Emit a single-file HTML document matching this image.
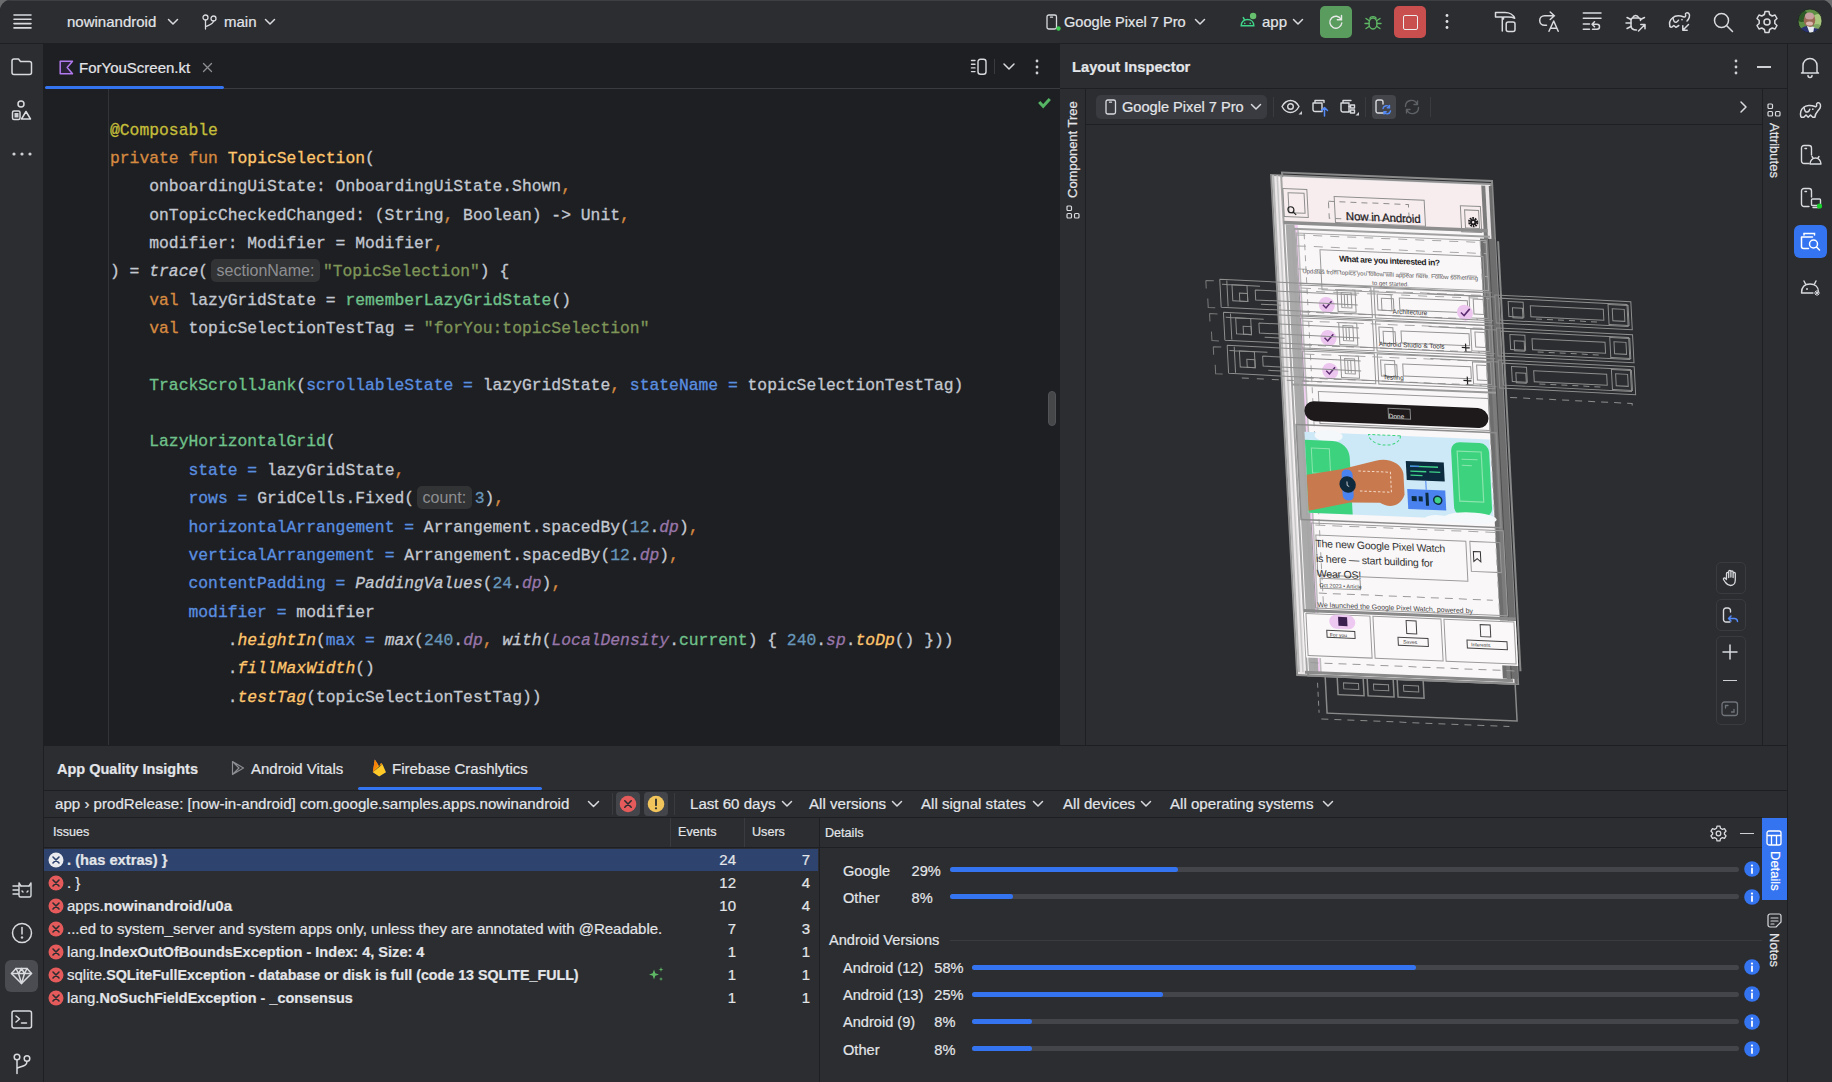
<!DOCTYPE html>
<html><head><meta charset="utf-8">
<style>
*{box-sizing:border-box;margin:0;padding:0}
html,body{width:1832px;height:1082px;overflow:hidden;background:#6b6c6e}
body{font-family:"Liberation Sans",sans-serif;color:#DFE1E5;position:relative}
.win{position:absolute;left:0;top:0;width:1832px;height:1082px;background:#2B2D30;border-radius:11px 11px 0 0;overflow:hidden}
.win:after{content:"";position:absolute;left:0;top:0;right:0;height:1px;background:#3D3F43;border-radius:11px 11px 0 0}
.a{position:absolute}
.t{position:absolute;white-space:pre;font-size:15px;line-height:20px;color:#E3E5E9;-webkit-text-stroke:0.2px currentColor}
.s13{font-size:13px;line-height:16px}
.b{font-weight:bold}
.code{position:absolute;left:110px;top:116.5px;font-family:"Liberation Mono",monospace;font-size:16.35px;line-height:28.36px;white-space:pre;color:#C3C8D1;-webkit-text-stroke:0.3px currentColor}
.kw{color:#D68A41}.an{color:#C4BE3A}.fd{color:#FFC66D}.st{color:#7F9659}.cf{color:#6FC28B}.na{color:#5A8FE0}.nu{color:#6897BB}.pu{color:#9876AA;font-style:italic}.ex{color:#FFC66D;font-style:italic}.it{font-style:italic}
.hint{-webkit-text-stroke:0;display:inline-block;background:#323335;color:#8E8F92;font-family:"Liberation Sans",sans-serif;font-size:16px;line-height:23px;border-radius:5px;padding:0 5.5px;margin:0 3px 0 3px;vertical-align:0px}
svg{position:absolute;overflow:visible}
.ic{fill:none;stroke:#D8DADE;stroke-width:1.5;stroke-linecap:round;stroke-linejoin:round}
</style></head><body>
<div class="win">
<!-- top bar -->
<div class="a" style="left:0;top:0;width:1832px;height:43px;background:#2B2D30"></div>
<div class="a" style="left:0;top:43px;width:1832px;height:1px;background:#1E1F22"></div>


<!-- top bar content -->
<svg style="left:13px;top:14px" width="19" height="16"><g class="ic" style="stroke-width:1.6"><path d="M1 1H18M1 5.3H18M1 9.6H18M1 13.9H18"/></g></svg>
<div class="t" style="left:67px;top:12px">nowinandroid</div>
<svg style="left:168px;top:19px" width="10" height="6"><path class="ic" d="M0.5 0.5L5 5L9.5 0.5"/></svg>
<svg style="left:202px;top:14px" width="15" height="16"><g class="ic" style="stroke-width:1.3"><circle cx="3.5" cy="3.5" r="2.5"/><circle cx="11.5" cy="4.5" r="2.5"/><path d="M3.5 6V15M11.5 7C11.5 10 8 10.5 3.8 12.5"/></g></svg>
<div class="t" style="left:224px;top:12px">main</div>
<svg style="left:265px;top:19px" width="10" height="6"><path class="ic" d="M0.5 0.5L5 5L9.5 0.5"/></svg>

<svg style="left:1046px;top:14px" width="16" height="17"><g class="ic" style="stroke-width:1.3"><rect x="1" y="1" width="9.5" height="14" rx="1.8"/><path d="M4.5 3.2H6.5"/></g><circle cx="12.5" cy="14.5" r="2.2" fill="#3DCB55"/></svg>
<div class="t" style="left:1064px;top:12px;font-size:14.6px">Google Pixel 7 Pro</div>
<svg style="left:1195px;top:19px" width="10" height="6"><path class="ic" d="M0.5 0.5L5 5L9.5 0.5"/></svg>
<svg style="left:1239px;top:12px" width="19" height="16"><g fill="none" stroke="#3FD68A" stroke-width="1.5" stroke-linecap="round"><path d="M2.2 13.7C2.2 10 4.8 7.6 8.5 7.6C12.2 7.6 14.8 10 14.8 13.7Z"/><path d="M4.3 5.6L5.7 8.2"/></g><circle cx="5.8" cy="11.4" r="0.8" fill="#3FD68A"/><circle cx="11.2" cy="11.4" r="0.8" fill="#3FD68A"/><circle cx="14.1" cy="4" r="3.2" fill="#66C06E"/></svg>
<div class="t" style="left:1262px;top:12px">app</div>
<svg style="left:1293px;top:19px" width="10" height="6"><path class="ic" d="M0.5 0.5L5 5L9.5 0.5"/></svg>
<div class="a" style="left:1320px;top:6px;width:32px;height:32px;background:#599C5E;border-radius:5px"></div>
<svg style="left:1328px;top:14px" width="16" height="16"><g fill="none" stroke="#E8E8E8" stroke-width="1.4" stroke-linecap="round"><path d="M13.2 5.5A6 6 0 1 0 13.8 9"/><path d="M13.5 1.5V5.8H9.3"/></g></svg>
<svg style="left:1364px;top:13px" width="18" height="18"><g fill="none" stroke="#5FB865" stroke-width="1.4" stroke-linecap="round"><ellipse cx="9" cy="10.5" rx="4" ry="5.5"/><path d="M6 5.5C6 3 12 3 12 5.5M1 10.5H5M13 10.5H17M2 5.5L5 7.5M16 5.5L13 7.5M2 15.5L5 13.5M16 15.5L13 13.5"/></g></svg>
<div class="a" style="left:1394px;top:6px;width:32px;height:32px;background:#C94F4F;border-radius:5px"></div>
<div class="a" style="left:1402.5px;top:14.5px;width:15px;height:15px;border:1.5px solid #EDEDED;border-radius:2px"></div>
<svg style="left:1444px;top:13px" width="6" height="18"><g fill="#DFE1E5"><circle cx="3" cy="2.5" r="1.4"/><circle cx="3" cy="8.5" r="1.4"/><circle cx="3" cy="14.5" r="1.4"/></g></svg>

<svg style="left:1488px;top:6px" width="34" height="32"><g class="ic" style="stroke-width:1.5"><path d="M7.5 6.5H17C21.5 6.5 25.5 9 26.7 12.3C25 11.3 22.5 11 20 11H15.5V13M7.5 6.5V11H14.3M14.3 11.5V25"/><rect x="18.2" y="16" width="8.8" height="9.5" rx="2"/></g></svg>
<svg style="left:1488px;top:6px" width="80" height="32"><g class="ic" style="stroke-width:1.5"><path d="M66.5 9.7H56.5A4.8 4.8 0 0 0 56.5 19.3H58.5M62.2 6L66.3 9.7L62.2 13.5M61 25.3L65.7 15L70.2 25.3M62.5 22.2H68.7"/></g></svg>
<svg style="left:1578px;top:6px" width="30" height="32"><g class="ic" style="stroke-width:1.5"><path d="M5.3 7H23M5.3 12.3H23M5.3 18H11.5M5.3 23.3H11.5M14 18.3H19A2.5 2.5 0 0 1 19 23.3H14.5M16.5 15.8L14 18.3L16.5 20.8"/></g></svg>
<svg style="left:1620px;top:6px" width="34" height="32"><g class="ic" style="stroke-width:1.5"><path d="M12.8 11.5A3 3 0 0 1 18.5 11.5"/><path d="M20.5 14.5V13.5C20.5 12.5 19.5 12 18.5 12H13C12 12 11 13 11 14.5V19.5C11 22.5 13 24 16.5 24"/><path d="M7 11.5L11 13.5M6 17H11M7 22.5L11 20.5M24.5 11.5L20.5 13.5"/><path d="M18.5 25L25 18.5M20.8 18.5H25V22.7"/></g></svg>
<svg style="left:1662px;top:6px" width="34" height="32"><g class="ic" style="stroke-width:1.5"><path d="M8 20.5C7 17 8.5 13.5 10.5 12C13 9.5 18 9.5 22 11C23.5 11.5 24 9.5 23.5 8.5C23 7 25.5 6 26.8 7.5C28.5 9.5 27 13 25 15"/><path d="M8 20.5C8.5 21.5 9.5 21.5 10.2 20.8L11.8 19.5L14 21.3L16.8 19.5"/><path d="M11 12C11.5 15 12.5 16.5 14.2 16.2C15 16 16 15 16.5 14.2"/><path d="M26.5 18.5L20.8 24.2M20.8 19.8V24.2H25.2"/></g><circle cx="20" cy="13.6" r="0.9" fill="#CED0D6"/></svg>
<svg style="left:1713px;top:12px" width="21" height="21"><g class="ic"><circle cx="8.5" cy="8.5" r="7"/><path d="M13.5 13.5L19.5 19.5"/></g></svg>
<svg style="left:1756px;top:11px" width="22" height="22"><g class="ic"><path d="M9 1.5H13L13.6 4.4L16.2 5.9L19 4.9L21 8.4L18.8 10.4V13.4L21 15.4L19 18.9L16.2 17.9L13.6 19.4L13 22.3H9L8.4 19.4L5.8 17.9L3 18.9L1 15.4L3.2 13.4V10.4L1 8.4L3 4.9L5.8 5.9L8.4 4.4Z" transform="translate(0,-0.9)"/><circle cx="11" cy="11" r="3"/></g></svg>
<svg style="left:1797px;top:8px" width="26" height="26" viewBox="0 0 26 26"><defs><clipPath id="av"><circle cx="13" cy="13" r="12"/></clipPath></defs><g clip-path="url(#av)"><rect width="26" height="26" fill="#5E8F45"/><circle cx="5" cy="8" r="6" fill="#2F5A28"/><circle cx="21" cy="12" r="6" fill="#A9C87E"/><circle cx="20" cy="20" r="4" fill="#7FA862"/><ellipse cx="12.5" cy="12" rx="5.8" ry="7.2" fill="#9A6A55"/><ellipse cx="12.5" cy="8" rx="4.5" ry="3.5" fill="#C9A0A0"/><ellipse cx="12.5" cy="15.5" rx="3.5" ry="2" fill="#D9B7AE"/><path d="M1 24C3 20 7 18.5 10 18L13 26H1Z" fill="#2B3270"/><path d="M10 18L13 19L16 18.5L19 21L17 26H13Z" fill="#E8ECF2"/><path d="M17 20L22 21L25 26H16Z" fill="#2B3270"/></g><circle cx="13" cy="13" r="12" fill="none" stroke="#1E1F22" stroke-width="0.8"/></svg>

<!-- left toolbar -->
<div class="a" style="left:0;top:44px;width:43px;height:1038px;background:#2B2D30"></div>
<div class="a" style="left:43px;top:44px;width:1px;height:1038px;background:#1E1F22"></div>

<!-- editor -->
<div class="a" style="left:44px;top:44px;width:1016px;height:701px;background:#1E1F22"></div>
<div class="a" style="left:224px;top:88px;width:836px;height:1px;background:#393B40"></div>
<div class="a" style="left:45px;top:86px;width:179px;height:3px;background:#3574F0;border-radius:2px"></div>
<div class="a" style="left:108px;top:89px;width:1px;height:656px;background:#313337"></div>

<div class="code"><span class="an">@Composable</span>
<span class="kw">private fun </span><span class="fd">TopicSelection</span>(
    onboardingUiState: OnboardingUiState.Shown<span class="kw">,</span>
    onTopicCheckedChanged: (String<span class="kw">,</span> Boolean) -> Unit<span class="kw">,</span>
    modifier: Modifier = Modifier<span class="kw">,</span>
) = <span class="it">trace</span>(<span class="hint">sectionName:</span><span class="st">"TopicSelection"</span>) {
    <span class="kw">val </span>lazyGridState = <span class="cf">rememberLazyGridState</span>()
    <span class="kw">val </span>topicSelectionTestTag = <span class="st">"forYou:topicSelection"</span>

    <span class="cf">TrackScrollJank</span>(<span class="na">scrollableState =</span> lazyGridState<span class="kw">, </span><span class="na">stateName =</span> topicSelectionTestTag)

    <span class="cf">LazyHorizontalGrid</span>(
        <span class="na">state =</span> lazyGridState<span class="kw">,</span>
        <span class="na">rows =</span> GridCells.Fixed(<span class="hint">count:</span><span class="nu">3</span>)<span class="kw">,</span>
        <span class="na">horizontalArrangement =</span> Arrangement.spacedBy(<span class="nu">12</span>.<span class="pu">dp</span>)<span class="kw">,</span>
        <span class="na">verticalArrangement =</span> Arrangement.spacedBy(<span class="nu">12</span>.<span class="pu">dp</span>)<span class="kw">,</span>
        <span class="na">contentPadding =</span> <span class="it">PaddingValues</span>(<span class="nu">24</span>.<span class="pu">dp</span>)<span class="kw">,</span>
        <span class="na">modifier =</span> modifier
            .<span class="ex">heightIn</span>(<span class="na">max =</span> <span class="it">max</span>(<span class="nu">240</span>.<span class="pu">dp</span><span class="kw">, </span><span class="it">with</span>(<span class="pu">LocalDensity</span>.<span class="cf">current</span>) { <span class="nu">240</span>.<span class="pu">sp</span>.<span class="ex">toDp</span>() }))
            .<span class="ex">fillMaxWidth</span>()
            .<span class="ex">testTag</span>(topicSelectionTestTag))</div>


<!-- left toolbar icons -->
<svg style="left:11px;top:58px" width="22" height="18"><path class="ic" d="M1 3A2 2 0 0 1 3 1H7.5L9.5 3.5H18.5A2 2 0 0 1 20.5 5.5V14.5A2 2 0 0 1 18.5 16.5H3A2 2 0 0 1 1 14.5Z" style="stroke-width:1.5"/></svg>
<svg style="left:11px;top:100px" width="22" height="22"><g class="ic" style="stroke-width:1.5"><circle cx="10" cy="4" r="3"/><rect x="1.5" y="11" width="7.5" height="8.5" rx="1.5"/><path d="M15 11.5L19.5 19H10.5Z"/></g><rect x="3.5" y="13" width="4" height="4.5" fill="#CED0D6"/></svg>
<svg style="left:12px;top:151px" width="20" height="6"><g fill="#CED0D6"><circle cx="2" cy="3" r="1.6"/><circle cx="10" cy="3" r="1.6"/><circle cx="18" cy="3" r="1.6"/></g></svg>

<svg style="left:12px;top:881px" width="22" height="18"><g class="ic" style="stroke-width:1.4"><path d="M1 5H6M1 9H6M1 13H6M7 2L9 5M19 2L17 5M7 2V14.5A1.5 1.5 0 0 0 8.5 16H17.5A1.5 1.5 0 0 0 19 14.5V2"/><path d="M9 5H17M10 10L11 11M16 10L15 11"/></g></svg>
<svg style="left:11px;top:922px" width="22" height="22"><g class="ic" style="stroke-width:1.5"><circle cx="11" cy="11" r="9.5"/><path d="M11 5.5V12"/></g><circle cx="11" cy="15.5" r="1.2" fill="#CED0D6"/></svg>
<div class="a" style="left:5px;top:960px;width:33px;height:32px;background:#4A4C51;border-radius:6px"></div>
<svg style="left:11px;top:967px" width="22" height="18"><g class="ic" style="stroke-width:1.5"><path d="M5 1.5H16L20.5 6.5L10.5 16.5L0.5 6.5Z"/><path d="M0.5 6.5H20.5M7.5 6.5L10.5 16.5L13.5 6.5M5 1.5L7.5 6.5L10.5 1.5L13.5 6.5L16 1.5"/></g></svg>
<svg style="left:11px;top:1010px" width="22" height="20"><g class="ic" style="stroke-width:1.5"><rect x="1" y="1" width="19.5" height="17" rx="2"/><path d="M5 6L8.5 9L5 12M10.5 13H15.5"/></g></svg>
<svg style="left:13px;top:1053px" width="18" height="22"><g class="ic" style="stroke-width:1.5"><circle cx="4" cy="4" r="2.8"/><circle cx="14" cy="5.5" r="2.8"/><path d="M4 7V20.5M14 8.5C14 12.5 10 13 4.5 15"/></g></svg>

<!-- editor tab -->
<svg style="left:59px;top:60px" width="16" height="16"><path d="M1.2 1.2H13.5L8.2 7.5L13.5 13.8H1.2Z" fill="#2A2337" stroke="#B27AF0" stroke-width="1.5" stroke-linejoin="round"/></svg>
<div class="t" style="left:79px;top:58px">ForYouScreen.kt</div>
<svg style="left:202px;top:62px" width="11" height="11"><path d="M1.5 1.5L9.5 9.5M9.5 1.5L1.5 9.5" stroke="#8C8E93" stroke-width="1.3" stroke-linecap="round"/></svg>
<svg style="left:970px;top:58px" width="20" height="18"><g class="ic" style="stroke-width:1.4"><path d="M1.5 2.5H5M1.5 6.2H5M1.5 9.9H5M1.5 13.6H5"/><rect x="8" y="1.2" width="8" height="15" rx="2.5"/></g></svg>
<div class="a" style="left:994px;top:59px;width:1px;height:15px;background:#393B40"></div>
<svg style="left:1003px;top:63px" width="12" height="8"><path class="ic" d="M1 1L6 6L11 1"/></svg>
<svg style="left:1034px;top:59px" width="6" height="16"><g fill="#CED0D6"><circle cx="3" cy="2" r="1.4"/><circle cx="3" cy="8" r="1.4"/><circle cx="3" cy="14" r="1.4"/></g></svg>
<svg style="left:1037px;top:96px" width="15" height="13"><path d="M2.2 5.9L6.2 10.2L12.8 3" fill="none" stroke="#55B565" stroke-width="3"/></svg>
<div class="a" style="left:1048px;top:390.5px;width:8px;height:35px;background:#464749;border:1px solid #525356;border-radius:4px"></div>

<!-- layout inspector -->
<div class="a" style="left:1060px;top:44px;width:727px;height:701px;background:#2B2D30"></div>


<!-- LI header -->
<div class="t b" style="left:1072px;top:57px;font-size:14.7px">Layout Inspector</div>
<svg style="left:1733px;top:59px" width="6" height="16"><g fill="#CED0D6"><circle cx="3" cy="2" r="1.4"/><circle cx="3" cy="8" r="1.4"/><circle cx="3" cy="14" r="1.4"/></g></svg>
<div class="a" style="left:1757px;top:66px;width:14px;height:1.5px;background:#CED0D6"></div>
<div class="a" style="left:1060px;top:88px;width:727px;height:1px;background:#1E1F22"></div>
<!-- component tree strip -->
<div class="a" style="left:1085px;top:89px;width:1px;height:656px;background:#1E1F22"></div>
<div class="t s13" style="left:1065px;top:198px;transform:rotate(-90deg);transform-origin:0 0;width:97px">Component Tree</div>
<svg style="left:1066px;top:205px" width="14" height="14"><g class="ic" style="stroke-width:1.2"><rect x="1" y="1" width="4.5" height="4.5" rx="1"/><rect x="1" y="8.5" width="4.5" height="4.5" rx="1"/><rect x="8.5" y="8.5" width="4.5" height="4.5" rx="1"/></g></svg>
<!-- attributes strip -->
<div class="a" style="left:1762px;top:89px;width:1px;height:656px;background:#1E1F22"></div>
<div class="t s13" style="left:1782px;top:123px;transform:rotate(90deg);transform-origin:0 0;width:57px">Attributes</div>
<svg style="left:1767px;top:103px" width="14" height="14"><g class="ic" style="stroke-width:1.2"><rect x="1" y="1" width="4.5" height="4.5" rx="1"/><rect x="1" y="8.5" width="4.5" height="4.5" rx="1"/><rect x="8.5" y="8.5" width="4.5" height="4.5" rx="1"/></g></svg>
<!-- LI toolbar -->
<div class="a" style="left:1086px;top:124px;width:676px;height:1px;background:#1E1F22"></div>
<div class="a" style="left:1096px;top:95px;width:171px;height:24px;background:#393B40;border-radius:5px"></div>
<svg style="left:1105px;top:99px" width="12" height="16"><g class="ic" style="stroke-width:1.3"><rect x="1" y="1" width="9.5" height="14" rx="1.8"/><path d="M4.5 3.2H6.5"/></g></svg>
<div class="t" style="left:1122px;top:97px;font-size:14.6px">Google Pixel 7 Pro</div>
<svg style="left:1251px;top:104px" width="10" height="6"><path class="ic" d="M0.5 0.5L5 5L9.5 0.5"/></svg>
<div class="a" style="left:1273px;top:97px;width:1px;height:20px;background:#393B40"></div>
<svg style="left:1281px;top:99px" width="22" height="16"><g class="ic" style="stroke-width:1.4"><path d="M1 7.5C3.5 3 6.5 1.5 9.5 1.5C12.5 1.5 15.5 3 18 7.5C15.5 12 12.5 13.5 9.5 13.5C6.5 13.5 3.5 12 1 7.5Z"/><circle cx="9.5" cy="7.5" r="2.8"/></g><path d="M21 12V15.5H17.5Z" fill="#CED0D6"/></svg>
<svg style="left:1312px;top:99px" width="18" height="18"><g class="ic" style="stroke-width:1.4"><path d="M3 3.5V1.5H12V3.5M1 4H10V12.5H3A2 2 0 0 1 1 10.5Z"/></g><g fill="none" stroke="#548AF7" stroke-width="1.5" stroke-linecap="round" stroke-linejoin="round"><path d="M12.5 17V8.5M9.5 11.5L12.5 8.5L15.5 11.5"/></g></svg>
<svg style="left:1340px;top:99px" width="20" height="18"><g class="ic" style="stroke-width:1.4"><path d="M3 3.5V1.5H11M1 4H9V13H3A2 2 0 0 1 1 11Z"/><rect x="10.5" y="6" width="4" height="3"/><rect x="10.5" y="11" width="4" height="3"/><path d="M9 7.5H10.5M9 12.5H10.5"/></g><path d="M19 13V16.5H15.5Z" fill="#CED0D6"/></svg>
<div class="a" style="left:1365px;top:97px;width:1px;height:20px;background:#393B40"></div>
<div class="a" style="left:1372px;top:95px;width:24px;height:24px;background:#43454A;border-radius:4px"></div>
<svg style="left:1375px;top:99px" width="18" height="17"><g class="ic" style="stroke-width:1.4"><path d="M8.5 14H3A2 2 0 0 1 1 12V3A2 2 0 0 1 3 1H6A2 2 0 0 1 8 3V5"/></g><g fill="none" stroke="#548AF7" stroke-width="1.4" stroke-linecap="round"><path d="M8 9.5A3.5 3.5 0 0 1 14.5 8.5M15.5 12A3.5 3.5 0 0 1 9 13M14.5 6.5V8.8H12.3M9 15V12.8H11.2"/></g></svg>
<svg style="left:1403px;top:99px" width="18" height="16"><g fill="none" stroke="#5E6166" stroke-width="1.4" stroke-linecap="round"><path d="M2.5 7.5A6 6 0 0 1 14 5M15.5 8.5A6 6 0 0 1 4 11M14.5 2V5.5H11M3.5 14V10.5H7"/></g></svg>
<div class="a" style="left:1430px;top:97px;width:1px;height:20px;background:#393B40"></div>
<svg style="left:1740px;top:101px" width="7" height="12"><path class="ic" d="M1 1L6 6L1 11"/></svg>
<!--PHONE--><svg style="left:0;top:0" width="1832" height="1082" viewBox="0 0 1832 1082">
<g transform="matrix(1 0.041 0.052 1 1271 172)">
<rect x="0" y="3" width="220" height="500" fill="#EAE6E8" stroke="#8F8F8F" stroke-width="2"/>
<rect x="11" y="0" width="210" height="503" fill="none" stroke="#8A8A8A" stroke-width="2"/>
<rect x="8" y="5" width="206" height="495" fill="#FAF7F8"/>
<rect x="8" y="5" width="206" height="46" fill="#F7EDEE"/>
<rect x="12" y="52" width="9" height="448" fill="#A9A9A9"/>
<rect x="21" y="52" width="3" height="448" fill="#F3D0F3"/>
<path d="M2 3V500" stroke="#B8B8B8" stroke-width="2"/>
<path d="M6 3V500" stroke="#C8C8C8" stroke-width="1.5"/>
<path d="M10 3V500" stroke="#A5A5A5" stroke-width="2"/>
<path d="M20 55V500" stroke="#A8A8A8" stroke-width="3"/>
<path d="M24 55V500" stroke="#C0C0C0" stroke-width="1.5"/>
<rect x="206" y="58" width="15" height="440" fill="#6E6E6E"/><path d="M214 58V498" stroke="#4E4E4E" stroke-width="2"/>
<path d="M212 5V500" stroke="#7C7C7C" stroke-width="4"/>
<path d="M219 5V503" stroke="#6E6E6E" stroke-width="3"/>
<path d="M224 60V490" stroke="#888" stroke-width="2"/>
<path d="M10 50H214" stroke="#8D8D8D" stroke-width="3.5"/>
<path d="M20 56H216" stroke="#A0A0A0" stroke-width="2"/>
<g fill="none" stroke="#8E8E8E" stroke-width="1"><rect x="11" y="16" width="24" height="28"/><rect x="16" y="20" width="16" height="20"/><rect x="62" y="22" width="90" height="26"/><rect x="56" y="27" width="80" height="17" stroke-dasharray="6 5"/><rect x="188" y="26" width="20" height="26"/><rect x="192" y="30" width="14" height="18"/></g>
<text x="110" y="45" font-family="Liberation Sans" font-size="11.5" fill="#1D1B1E" text-anchor="middle" letter-spacing="-0.2" stroke="#1D1B1E" stroke-width="0.25">Now in Android</text>
<g fill="none" stroke="#222" stroke-width="1.2"><circle cx="18" cy="37" r="3"/><path d="M20 39L23 42"/></g>
<circle cx="200" cy="42" r="3.8" fill="none" stroke="#1D1B1E" stroke-width="2.6" stroke-dasharray="1.6 0.8"/><circle cx="200" cy="42" r="3" fill="#1D1B1E"/><circle cx="200" cy="42" r="1.2" fill="#F7EDEE"/>
<g stroke="#A8A8A8" stroke-width="1" fill="none">
<path d="M22 62H212" stroke-dasharray="9 8"/>
<path d="M22 73H212" stroke-dasharray="9 8"/>
<path d="M22 96H212" stroke-dasharray="9 8"/>
<path d="M22 118H212" stroke-dasharray="9 8"/>
<rect x="22" y="60" width="190" height="50"/>
<rect x="45" y="76" width="163" height="40" stroke="#9A9A9A"/>
</g>
<text x="114" y="87" font-family="Liberation Sans" font-size="8.5" font-weight="bold" fill="#222" text-anchor="middle" letter-spacing="-0.4">What are you interested in?</text>
<text x="114" y="100" font-family="Liberation Sans" font-size="6" fill="#555" text-anchor="middle">Updates from topics you follow will appear here. Follow something</text>
<text x="114" y="109" font-family="Liberation Sans" font-size="6" fill="#555" text-anchor="middle">to get started.</text>
<g fill="none" stroke="#959595" stroke-width="1">
<rect x="22" y="112" width="72" height="30"/><rect x="97" y="112" width="116" height="30"/>
<rect x="60" y="115" width="18" height="22"/><rect x="64" y="118" width="10" height="15"/><path d="M67 120V132M70 120V132"/>
<rect x="100" y="118" width="14" height="16"/><rect x="104" y="122" width="12" height="12"/>
<rect x="122" y="121" width="68" height="12"/><path d="M24 139H90M100 139H200" stroke-dasharray="8 6"/>
<rect x="192" y="116" width="18" height="22"/><rect x="196" y="119" width="10" height="15"/>
</g>
<circle cx="49" cy="131" r="8" fill="#ECC6EF"/><path d="M45 131L48 134L54 127" stroke="#5B2C6F" stroke-width="1.5" fill="none"/>
<text x="132" y="137" font-family="Liberation Sans" font-size="6.5" fill="#333" text-anchor="middle">Architecture</text>
<circle cx="187" cy="133" r="8" fill="#ECC6EF"/><path d="M183 133L186 136L192 129" stroke="#5B2C6F" stroke-width="1.5" fill="none"/>
<g fill="none" stroke="#959595" stroke-width="1">
<rect x="22" y="145" width="72" height="30"/><rect x="97" y="145" width="116" height="30"/>
<rect x="60" y="148" width="18" height="22"/><rect x="64" y="151" width="10" height="15"/><path d="M67 153V165M70 153V165"/>
<rect x="100" y="151" width="14" height="16"/><rect x="104" y="155" width="12" height="12"/>
<rect x="122" y="154" width="68" height="12"/><path d="M24 172H90M100 172H200" stroke-dasharray="8 6"/>
<rect x="192" y="149" width="18" height="22"/><rect x="196" y="152" width="10" height="15"/>
</g>
<circle cx="49" cy="164" r="8" fill="#ECC6EF"/><path d="M45 164L48 167L54 160" stroke="#5B2C6F" stroke-width="1.5" fill="none"/>
<text x="132" y="170" font-family="Liberation Sans" font-size="6.5" fill="#333" text-anchor="middle">Android Studio &amp; Tools</text>
<path d="M186 164V172M182 168H190" stroke="#222" stroke-width="1.2"/>
<g fill="none" stroke="#959595" stroke-width="1">
<rect x="22" y="178" width="72" height="30"/><rect x="97" y="178" width="116" height="30"/>
<rect x="60" y="181" width="18" height="22"/><rect x="64" y="184" width="10" height="15"/><path d="M67 186V198M70 186V198"/>
<rect x="100" y="184" width="14" height="16"/><rect x="104" y="188" width="12" height="12"/>
<rect x="122" y="187" width="68" height="12"/><path d="M24 205H90M100 205H200" stroke-dasharray="8 6"/>
<rect x="192" y="182" width="18" height="22"/><rect x="196" y="185" width="10" height="15"/>
</g>
<circle cx="49" cy="197" r="8" fill="#ECC6EF"/><path d="M45 197L48 200L54 193" stroke="#5B2C6F" stroke-width="1.5" fill="none"/>
<text x="112" y="203" font-family="Liberation Sans" font-size="6.5" fill="#333" text-anchor="middle">Testing</text>
<path d="M186 197V205M182 201H190" stroke="#222" stroke-width="1.2"/>
<path d="M10 212H214" stroke="#9A9A9A" stroke-width="2"/>
<g fill="none" stroke="#A6A6A6" stroke-width="1"><path d="M30 60V430M206 60V430" stroke-dasharray="6 5"/><path d="M24 115H210M24 148H210M24 181H210M26 352H210M26 442H210" stroke-dasharray="10 7"/><path d="M18 58V500" /></g>
<rect x="36" y="218" width="170" height="32" fill="none" stroke="#9A9A9A" stroke-width="1"/>
<rect x="21" y="228" width="184" height="20" rx="10" fill="#1E1A1C"/>
<text x="113" y="242" font-family="Liberation Sans" font-size="6.5" fill="#EEE" text-anchor="middle">Done</text>
<rect x="105" y="232" width="22" height="10" fill="none" stroke="#888" stroke-width="1"/>
<rect x="20" y="259" width="185" height="81" fill="#CDE9F7"/>
<ellipse cx="44" cy="262" rx="14" ry="6" fill="#F4F8FB"/>
<path d="M20 267H48A16 16 0 0 1 64 283V340H20Z" fill="#3DD37E"/><path d="M26 275H44V300H26Z" fill="none" stroke="#8BE5AE" stroke-width="1"/>
<path d="M116 259A16 10 0 0 1 84 259Z" fill="none" stroke="#3DD37E" stroke-width="1" stroke-dasharray="3 2"/>
<rect x="166" y="263" width="38" height="74" rx="9" fill="#3DD37E"/><rect x="172" y="272" width="24" height="50" fill="none" stroke="#8BE5AE" stroke-width="1.2"/><path d="M176 280H192M176 286H186" stroke="#8BE5AE" stroke-width="1"/>
<ellipse cx="182" cy="339" rx="26" ry="6" fill="#F4F8FB"/><ellipse cx="150" cy="341" rx="14" ry="4" fill="#F4F8FB"/>
<path d="M20 302L55 295L90 285C102 281 116 286 117 297L117 318C112 331 100 332 92 327L62 328L20 338Z" fill="#C87A4E"/>
<path d="M72 296H104V316H72" fill="none" stroke="#F3D9C8" stroke-width="1" stroke-dasharray="2.5 2"/>
<rect x="55" y="295" width="11" height="31" rx="5" fill="#4A82F0"/><circle cx="60.5" cy="310" r="8.2" fill="#0F2A3C"/><path d="M60 307V311L62 312" stroke="#EEE" stroke-width="0.8" fill="none"/>
<rect x="120" y="284" width="38" height="19" fill="#0D2B3E"/><path d="M124 289H152M124 294H140M143 294H154M124 298H136" stroke="#3FD38A" stroke-width="1.3"/><path d="M124 289H133" stroke="#4A82F0" stroke-width="1.3"/>
<path d="M139 303V312" stroke="#4A82F0" stroke-width="1"/>
<rect x="120" y="312" width="38" height="20" fill="#4A82F0"/><g fill="#0D2B3E"><rect x="124" y="319" width="5" height="5"/><rect x="131" y="319" width="4" height="5"/><rect x="138" y="315" width="3" height="13"/></g><circle cx="150" cy="322" r="4" fill="#3FD38A" stroke="#0D2B3E" stroke-width="1.5"/>
<g fill="none" stroke="#8C8C8C" stroke-width="1.5"><rect x="12" y="252" width="200" height="95"/></g>
<g fill="none" stroke="#9A9A9A" stroke-width="1"><rect x="22" y="350" width="192" height="85"/><rect x="26" y="362" width="150" height="40"/><rect x="180" y="362" width="30" height="30"/><rect x="28" y="405" width="40" height="10"/><path d="M26 420H200" stroke-dasharray="8 6"/></g>
<text font-family="Liberation Sans" font-size="10.5" fill="#333" letter-spacing="-0.2"><tspan x="25" y="374">The new Google Pixel Watch</tspan><tspan x="25" y="389">is here — start building for</tspan><tspan x="25" y="404">Wear OS!</tspan></text>
<text x="27" y="414" font-family="Liberation Sans" font-size="5.5" fill="#444">Oct 2023 • Article</text>
<text x="24" y="434" font-family="Liberation Sans" font-size="7" fill="#444">We launched the Google Pixel Watch, powered by</text>
<path d="M183 372H190V382L186.5 379L183 382Z" fill="none" stroke="#333" stroke-width="1"/>
<path d="M10 438H222" stroke="#8A8A8A" stroke-width="3"/>
<rect x="10" y="440" width="212" height="45" fill="#FBF8F9"/>
<g fill="none" stroke="#9A9A9A" stroke-width="1"><rect x="12" y="441" width="64" height="42"/><rect x="79" y="441" width="68" height="42"/><rect x="150" y="441" width="70" height="42"/><path d="M14 490H220" stroke-dasharray="8 6"/></g>
<rect x="35" y="441" width="26" height="14" rx="7" fill="#EDC8F0"/><rect x="44" y="443" width="9" height="9" fill="#3B1F4F"/>
<g fill="none" stroke="#444" stroke-width="1"><rect x="112" y="444" width="10" height="13"/><rect x="186" y="445" width="10" height="12"/><rect x="32" y="457" width="28" height="7"/><rect x="103" y="461" width="30" height="8"/><rect x="172" y="461" width="40" height="8"/></g>
<text font-family="Liberation Sans" font-size="5" fill="#333"><tspan x="35" y="463">For you</tspan><tspan x="108" y="467">Saves</tspan><tspan x="176" y="467">Interests</tspan></text>
<path d="M8 500H216" stroke="#8A8A8A" stroke-width="3"/>
<g fill="none" stroke="#8A8A8A" stroke-width="1.5"><rect x="28" y="503" width="190" height="37"/><rect x="40" y="503" width="26" height="18"/><rect x="70" y="503" width="26" height="18"/><rect x="100" y="503" width="26" height="18"/></g>
<g fill="none" stroke="#8A8A8A" stroke-width="1"><rect x="46" y="509" width="15" height="6"/><rect x="76" y="509" width="15" height="6"/><rect x="106" y="509" width="15" height="6"/><path d="M22 546H210" stroke-dasharray="7 6"/><path d="M20 510V540" stroke-dasharray="5 4"/></g>
</g>
<g transform="matrix(1 0.05 0.052 1 1271 172)" fill="none" stroke="#8E8E8E" stroke-width="1">
<path d="M-57 110H215M-57 138H215M-57 110V138"/>
<path d="M-50 111V137M-55 115H-17"/>
<rect x="-45" y="115" width="15" height="16"/><rect x="-38" y="123" width="8" height="8"/>
<path d="M-22 119H80M-22 119V129H80M-17 133H3" />
<path d="M-71 112V120M-71 112H-63M-70 130V139H-63" stroke="#7A7A7A"/>
<path d="M-55 143H215M-55 171H215M-55 143V171"/>
<path d="M-48 144V170M-53 148H-15"/>
<rect x="-43" y="148" width="15" height="16"/><rect x="-36" y="156" width="8" height="8"/>
<path d="M-20 152H80M-20 152V162H80M-15 166H5" />
<path d="M-69 145V153M-69 145H-61M-68 163V172H-61" stroke="#7A7A7A"/>
<path d="M-53 176H215M-53 204H215M-53 176V204"/>
<path d="M-46 177V203M-51 181H-13"/>
<rect x="-41" y="181" width="15" height="16"/><rect x="-34" y="189" width="8" height="8"/>
<path d="M-18 185H80M-18 185V195H80M-13 199H7" />
<path d="M-67 178V186M-67 178H-59M-66 196V205H-59" stroke="#7A7A7A"/>
<path d="M-40 208H40" stroke-dasharray="7 8"/>
<path d="M150 114H218"/>
<rect x="218" y="112" width="136" height="28"/>
<rect x="222" y="115" width="128" height="22"/>
<rect x="231" y="118" width="15" height="15"/><rect x="235" y="124" width="10" height="10"/>
<rect x="253" y="121" width="73" height="11"/><path d="M258 134H322" stroke-dasharray="6 5"/>
<rect x="331" y="116" width="20" height="20"/><rect x="335" y="120" width="12" height="12"/>
<path d="M150 147H218"/>
<rect x="218" y="145" width="136" height="28"/>
<rect x="222" y="148" width="128" height="22"/>
<rect x="231" y="151" width="15" height="15"/><rect x="235" y="157" width="10" height="10"/>
<rect x="253" y="154" width="73" height="11"/><path d="M258 167H322" stroke-dasharray="6 5"/>
<rect x="331" y="149" width="20" height="20"/><rect x="335" y="153" width="12" height="12"/>
<path d="M150 179H218"/>
<rect x="218" y="177" width="136" height="28"/>
<rect x="222" y="180" width="128" height="22"/>
<rect x="231" y="183" width="15" height="15"/><rect x="235" y="189" width="10" height="10"/>
<rect x="253" y="186" width="73" height="11"/><path d="M258 199H322" stroke-dasharray="6 5"/>
<rect x="331" y="181" width="20" height="20"/><rect x="335" y="185" width="12" height="12"/>
<path d="M228 214H350V220" stroke-dasharray="7 6"/>
</g>
</svg><!--/PHONE-->
<!-- zoom controls -->
<div class="a" style="left:1716px;top:562px;width:30px;height:32px;border:1px solid #393B40;border-radius:5px"></div>
<svg style="left:1722px;top:569px" width="18" height="18"><path class="ic" style="stroke-width:1.3" d="M4.5 9.5V4.5A1.1 1.1 0 0 1 6.7 4.5V8.5M6.7 8V2.5A1.1 1.1 0 0 1 8.9 2.5V8M8.9 8V3A1.1 1.1 0 0 1 11.1 3V8.5M11.1 8.5V4.5A1.1 1.1 0 0 1 13.3 4.5V11C13.3 14.5 11 16.5 8.5 16.5C6.5 16.5 5 15.5 3.5 13.5L1.5 10.5A1.1 1.1 0 0 1 3.3 9.3L4.5 10.5"/></svg>
<div class="a" style="left:1716px;top:599px;width:30px;height:32px;border:1px solid #393B40;border-radius:5px"></div>
<svg style="left:1722px;top:607px" width="18" height="17"><g class="ic" style="stroke-width:1.4"><path d="M8 15H4A2.5 2.5 0 0 1 1.5 12.5V3.5A2.5 2.5 0 0 1 4 1H6A2.5 2.5 0 0 1 8.5 3.5V5"/></g><g fill="none" stroke="#548AF7" stroke-width="1.5" stroke-linecap="round" stroke-linejoin="round"><path d="M9 9L6.5 11.5L9 14M6.5 11.5H12.5A3 3 0 0 1 15.5 14.5"/></g></svg>
<div class="a" style="left:1716px;top:636px;width:30px;height:89px;border:1px solid #393B40;border-radius:5px"></div>
<svg style="left:1722px;top:644px" width="16" height="16"><path class="ic" style="stroke-width:1.5" d="M8 1V15M1 8H15"/></svg>
<div class="a" style="left:1723px;top:679.5px;width:14px;height:1.5px;background:#CED0D6"></div>
<svg style="left:1721px;top:701px" width="18" height="16"><g fill="none" stroke="#6F737A" stroke-width="1.3" stroke-linecap="round"><rect x="1" y="1" width="15.5" height="13.5" rx="2.5"/><path d="M4.5 7V4.5H7M13 8.5V11H10.5"/></g></svg>

<!-- right toolbar -->
<div class="a" style="left:1787px;top:44px;width:1px;height:1038px;background:#1E1F22"></div>


<svg style="left:1800px;top:56px" width="22" height="22"><g class="ic" style="stroke-width:1.5"><path d="M3 16V9.5A7 7 0 0 1 17 9.5V16L18.5 17H1.5Z"/><path d="M8 19.5A2 2 0 0 0 12 19.5"/></g></svg>
<svg style="left:1795px;top:95px" width="32" height="30"><g class="ic" style="stroke-width:1.5"><path d="M5.8 21.5C5 17.5 6.5 14 8.5 12.5C11 10 16 9.8 20 11.5C21.2 12 22 11 21.6 9.8C21.2 8.2 23.2 7 24.6 8.2C26.2 9.8 25.6 12.8 24 14.6C22 17 20.2 18.5 19.8 22.3H17.8L15.5 20L13.2 22.3L11 20L8.8 22.3H6.5Z"/><path d="M9 12.5C9.5 15.8 10.8 17.5 12.5 17C13.5 16.6 14.5 15.3 14.8 14.2"/></g><circle cx="17.8" cy="14.2" r="0.9" fill="#CED0D6"/></svg>
<svg style="left:1800px;top:144px" width="22" height="22"><g class="ic" style="stroke-width:1.4"><path d="M9 19.5H4A2.5 2.5 0 0 1 1.5 17V4A2.5 2.5 0 0 1 4 1.5H9A2.5 2.5 0 0 1 11.5 4V11M5 4.5H6.5"/><path d="M10 20C10 16.5 12.5 14 15.5 14C18.5 14 21 16.5 21 20Z"/><path d="M12 12.5L13 14M19 12.5L18 14"/></g></svg>
<svg style="left:1800px;top:187px" width="23" height="23"><g class="ic" style="stroke-width:1.4"><path d="M9 19.5H4A2.5 2.5 0 0 1 1.5 17V4A2.5 2.5 0 0 1 4 1.5H9A2.5 2.5 0 0 1 11.5 4V10M5 4.5H6.5"/><rect x="11.5" y="12" width="9" height="6.5" rx="1"/><path d="M13 20.5H19"/></g><circle cx="19.5" cy="19" r="2.6" fill="#19D02B"/></svg>
<div class="a" style="left:1794px;top:225px;width:33px;height:33px;background:#3574F0;border-radius:6px"></div>
<svg style="left:1800px;top:231px" width="22" height="22"><g fill="none" stroke="#FFFFFF" stroke-width="1.5" stroke-linecap="round"><path d="M4 4V2.5H14.5V4M1.5 6H12.5M1.5 6V15.5A2 2 0 0 0 3.5 17.5H8.5"/><circle cx="13.5" cy="13" r="4"/><path d="M16.5 16L19.5 19"/></g></svg>
<svg style="left:1800px;top:277px" width="22" height="20"><g class="ic" style="stroke-width:1.4"><path d="M1.5 16C1.5 10 5 7 10 7C15 7 18.5 10 18.5 15M1.5 16H13"/><path d="M4 4L5.5 7M16 4L14.5 7"/></g><circle cx="7" cy="12" r="1" fill="#CED0D6"/><g stroke="#CED0D6" stroke-width="1"><path d="M17 13V19M14 16H20M15 14L19 18M19 14L15 18"/></g></svg>

<!-- bottom panel -->
<!-- bottom tabs -->
<div class="t b" style="left:57px;top:759px;font-size:14.5px">App Quality Insights</div>
<svg style="left:231px;top:760px" width="14" height="16"><path d="M1.5 1.5L12.5 8L1.5 14.5Z M1.5 1.5L8 8L1.5 14.5" fill="none" stroke="#8C8E93" stroke-width="1.2" stroke-linejoin="round"/></svg>
<div class="t" style="left:251px;top:759px">Android Vitals</div>
<svg style="left:371px;top:758px" width="17" height="20"><path d="M1.8 14.2L3.8 1.5L8.2 8.2L10 4.8L11.5 6.2L15 14.2L8.2 18.5Z" fill="#1E2A4A" stroke="#1E2A4A" stroke-width="1.2" stroke-linejoin="round"/><path d="M1.8 14.2L3.8 1.5L8.2 8.2Z" fill="#FFA000"/><path d="M1.8 14.2L11.5 6.2L15 14.2L8.2 18.5Z" fill="#FFCA28"/><path d="M1.8 14.2L3.8 1.5L7 6.5L1.8 14.2Z" fill="#F6820C"/><path d="M8.2 8.2L10 4.8L11.5 6.2Z" fill="#FFA000"/></svg>
<div class="t" style="left:392px;top:759px">Firebase Crashlytics</div>
<div class="a" style="left:358px;top:787px;width:184px;height:3px;background:#3574F0;border-radius:2px"></div>
<div class="a" style="left:44px;top:790px;width:1743px;height:1px;background:#1E1F22"></div>
<!-- filter row -->
<div class="t" style="left:55px;top:794px;font-size:15.1px">app › prodRelease: [now-in-android] com.google.samples.apps.nowinandroid</div>
<svg style="left:588px;top:801px" width="11" height="7"><path class="ic" d="M0.5 0.5L5.5 5.5L10.5 0.5"/></svg>
<div class="a" style="left:612px;top:793px;width:1px;height:22px;background:#393B40"></div>
<div class="a" style="left:616px;top:792px;width:24px;height:24px;background:#43454A;border-radius:4px"></div>
<svg style="left:619px;top:795px" width="18" height="18"><circle cx="9" cy="9" r="8.3" fill="#E55B5B"/><path d="M5.8 5.8L12.2 12.2M12.2 5.8L5.8 12.2" stroke="#2B2D30" stroke-width="1.6" stroke-linecap="round"/></svg>
<div class="a" style="left:644px;top:792px;width:24px;height:24px;background:#43454A;border-radius:4px"></div>
<svg style="left:647px;top:795px" width="18" height="18"><circle cx="9" cy="9" r="8.3" fill="#F2C55C"/><path d="M9 4.5V10.2" stroke="#2B2D30" stroke-width="1.8" stroke-linecap="round"/><circle cx="9" cy="13.3" r="1.1" fill="#2B2D30"/></svg>
<div class="a" style="left:674px;top:793px;width:1px;height:22px;background:#393B40"></div>
<div class="t" style="left:690px;top:794px;font-size:15.1px">Last 60 days</div>
<svg style="left:782px;top:801px" width="10" height="6"><path class="ic" d="M0.5 0.5L5 5L9.5 0.5"/></svg>
<div class="t" style="left:809px;top:794px;font-size:15.1px">All versions</div>
<svg style="left:892px;top:801px" width="10" height="6"><path class="ic" d="M0.5 0.5L5 5L9.5 0.5"/></svg>
<div class="t" style="left:921px;top:794px;font-size:15.1px">All signal states</div>
<svg style="left:1033px;top:801px" width="10" height="6"><path class="ic" d="M0.5 0.5L5 5L9.5 0.5"/></svg>
<div class="t" style="left:1063px;top:794px;font-size:15.1px">All devices</div>
<svg style="left:1141px;top:801px" width="10" height="6"><path class="ic" d="M0.5 0.5L5 5L9.5 0.5"/></svg>
<div class="t" style="left:1170px;top:794px;font-size:15.1px">All operating systems</div>
<svg style="left:1323px;top:801px" width="10" height="6"><path class="ic" d="M0.5 0.5L5 5L9.5 0.5"/></svg>
<div class="a" style="left:44px;top:817px;width:1718px;height:1px;background:#1E1F22"></div>
<!-- issues table -->
<div class="t s13" style="left:53px;top:824px;font-size:12.6px">Issues</div>
<div class="a" style="left:670px;top:818px;width:1px;height:30px;background:#393B40"></div>
<div class="t s13" style="left:678px;top:824px;font-size:12.6px">Events</div>
<div class="a" style="left:744px;top:818px;width:1px;height:30px;background:#393B40"></div>
<div class="t s13" style="left:752px;top:824px;font-size:12.6px">Users</div>
<div class="a" style="left:44px;top:847px;width:775px;height:1px;background:#1E1F22"></div>
<div class="a" style="left:819px;top:818px;width:1px;height:264px;background:#1E1F22"></div>
<div class="a" style="left:44px;top:849px;width:774px;height:22px;background:#2E436E"></div>
<svg style="left:48px;top:851.8px" width="16" height="16"><circle cx="8" cy="8" r="7.5" fill="#E9EBEF"/><path d="M5 5L11 11M11 5L5 11" stroke="#2E436E" stroke-width="1.6" stroke-linecap="round"/></svg>
<div class="t b" style="left:67px;top:850.3px;font-size:14.7px">. (has extras) }</div>
<div class="t" style="left:636px;top:850.3px;width:100px;text-align:right">24</div>
<div class="t" style="left:710px;top:850.3px;width:100px;text-align:right">7</div>
<svg style="left:48px;top:874.8px" width="16" height="16"><circle cx="8" cy="8" r="7.5" fill="#E55B5B"/><path d="M5 5L11 11M11 5L5 11" stroke="#2B2D30" stroke-width="1.6" stroke-linecap="round"/></svg>
<div class="t" style="left:67px;top:873.3px">. }</div>
<div class="t" style="left:636px;top:873.3px;width:100px;text-align:right">12</div>
<div class="t" style="left:710px;top:873.3px;width:100px;text-align:right">4</div>
<svg style="left:48px;top:897.8px" width="16" height="16"><circle cx="8" cy="8" r="7.5" fill="#E55B5B"/><path d="M5 5L11 11M11 5L5 11" stroke="#2B2D30" stroke-width="1.6" stroke-linecap="round"/></svg>
<div class="t" style="left:67px;top:896.3px">apps.<b>nowinandroid/u0a</b></div>
<div class="t" style="left:636px;top:896.3px;width:100px;text-align:right">10</div>
<div class="t" style="left:710px;top:896.3px;width:100px;text-align:right">4</div>
<svg style="left:48px;top:920.8px" width="16" height="16"><circle cx="8" cy="8" r="7.5" fill="#E55B5B"/><path d="M5 5L11 11M11 5L5 11" stroke="#2B2D30" stroke-width="1.6" stroke-linecap="round"/></svg>
<div class="t" style="left:67px;top:919.3px">...ed to system_server and system apps only, unless they are annotated with @Readable.</div>
<div class="t" style="left:636px;top:919.3px;width:100px;text-align:right">7</div>
<div class="t" style="left:710px;top:919.3px;width:100px;text-align:right">3</div>
<svg style="left:48px;top:943.8px" width="16" height="16"><circle cx="8" cy="8" r="7.5" fill="#E55B5B"/><path d="M5 5L11 11M11 5L5 11" stroke="#2B2D30" stroke-width="1.6" stroke-linecap="round"/></svg>
<div class="t" style="left:67px;top:942.3px">lang.<b style="font-size:14.55px">IndexOutOfBoundsException - Index: 4, Size: 4</b></div>
<div class="t" style="left:636px;top:942.3px;width:100px;text-align:right">1</div>
<div class="t" style="left:710px;top:942.3px;width:100px;text-align:right">1</div>
<svg style="left:48px;top:966.8px" width="16" height="16"><circle cx="8" cy="8" r="7.5" fill="#E55B5B"/><path d="M5 5L11 11M11 5L5 11" stroke="#2B2D30" stroke-width="1.6" stroke-linecap="round"/></svg>
<div class="t" style="left:67px;top:965.3px">sqlite.<b style="font-size:14.28px">SQLiteFullException - database or disk is full (code 13 SQLITE_FULL)</b></div>
<div class="t" style="left:636px;top:965.3px;width:100px;text-align:right">1</div>
<div class="t" style="left:710px;top:965.3px;width:100px;text-align:right">1</div>
<svg style="left:48px;top:989.8px" width="16" height="16"><circle cx="8" cy="8" r="7.5" fill="#E55B5B"/><path d="M5 5L11 11M11 5L5 11" stroke="#2B2D30" stroke-width="1.6" stroke-linecap="round"/></svg>
<div class="t" style="left:67px;top:988.3px">lang.<b style="font-size:14.43px">NoSuchFieldException - _consensus</b></div>
<div class="t" style="left:636px;top:988.3px;width:100px;text-align:right">1</div>
<div class="t" style="left:710px;top:988.3px;width:100px;text-align:right">1</div>
<svg style="left:648px;top:966px" width="17" height="16"><path d="M6 3.5L7.3 7.2L11 8.5L7.3 9.8L6 13.5L4.7 9.8L1 8.5L4.7 7.2Z" fill="#5FB865"/><path d="M13 1L13.6 2.9L15.5 3.5L13.6 4.1L13 6L12.4 4.1L10.5 3.5L12.4 2.9Z" fill="#5FB865"/><path d="M13 11L13.5 12.5L15 13L13.5 13.5L13 15L12.5 13.5L11 13L12.5 12.5Z" fill="#5FB865"/></svg>
<!-- details -->
<div class="t s13" style="left:825px;top:825px;font-size:12.6px">Details</div>
<svg style="left:1710px;top:825px" width="17" height="17"><g class="ic" style="stroke-width:1.3"><path d="M7 1.2H10L10.5 3.3L12.4 4.4L14.5 3.7L16 6.2L14.4 7.7V9.3L16 10.8L14.5 13.3L12.4 12.6L10.5 13.7L10 15.8H7L6.5 13.7L4.6 12.6L2.5 13.3L1 10.8L2.6 9.3V7.7L1 6.2L2.5 3.7L4.6 4.4L6.5 3.3Z"/><circle cx="8.5" cy="8.5" r="2.3"/></g></svg>
<div class="a" style="left:1740px;top:832.5px;width:14px;height:1.5px;background:#CED0D6"></div>
<div class="a" style="left:820px;top:847px;width:942px;height:1px;background:#1E1F22"></div>
<div class="a" style="left:1762px;top:818px;width:25px;height:82px;background:#3574F0"></div>
<svg style="left:1766px;top:830px" width="16" height="16"><g fill="none" stroke="#fff" stroke-width="1.3"><rect x="1" y="1" width="14" height="14" rx="2"/><path d="M1 5.5H15M5.5 5.5V15M10.5 5.5V15"/></g></svg>
<div class="t s13" style="left:1783px;top:851px;transform:rotate(90deg);transform-origin:0 0;color:#fff;width:40px">Details</div>
<svg style="left:1767px;top:913px" width="15" height="15"><g class="ic" style="stroke-width:1.2"><path d="M1 3A2 2 0 0 1 3 1H12A2 2 0 0 1 14 3V9L9 14H3A2 2 0 0 1 1 12Z"/><path d="M4 5H11M4 8H11M4 11H7"/></g></svg>
<div class="t s13" style="left:1782px;top:933px;transform:rotate(90deg);transform-origin:0 0;width:40px">Notes</div>
<div class="t" style="left:843px;top:860.5999999999999px;font-size:14.6px">Google</div>
<div class="t" style="left:911.6px;top:860.5999999999999px;font-size:14.6px">29%</div>
<div class="a" style="left:949.6px;top:866.8px;width:789.4px;height:5px;background:#43454A;border-radius:3px"></div>
<div class="a" style="left:949.6px;top:866.8px;width:228.69999999999993px;height:5px;background:#3574F0;border-radius:3px"></div>
<svg style="left:1744px;top:861.3px" width="16" height="16"><circle cx="8" cy="8" r="7.8" fill="#3574F0"/><circle cx="8" cy="4.6" r="1.1" fill="#fff"/><path d="M8 7.3V12" stroke="#fff" stroke-width="1.8" stroke-linecap="round"/></svg>
<div class="t" style="left:843px;top:888.0px;font-size:14.6px">Other</div>
<div class="t" style="left:911.6px;top:888.0px;font-size:14.6px">8%</div>
<div class="a" style="left:949.6px;top:894.2px;width:789.4px;height:5px;background:#43454A;border-radius:3px"></div>
<div class="a" style="left:949.6px;top:894.2px;width:63.39999999999998px;height:5px;background:#3574F0;border-radius:3px"></div>
<svg style="left:1744px;top:888.7px" width="16" height="16"><circle cx="8" cy="8" r="7.8" fill="#3574F0"/><circle cx="8" cy="4.6" r="1.1" fill="#fff"/><path d="M8 7.3V12" stroke="#fff" stroke-width="1.8" stroke-linecap="round"/></svg>
<div class="t" style="left:843px;top:957.8px;font-size:14.6px">Android (12)</div>
<div class="t" style="left:934.3px;top:957.8px;font-size:14.6px">58%</div>
<div class="a" style="left:971.7px;top:964.5px;width:767.3px;height:5px;background:#43454A;border-radius:3px"></div>
<div class="a" style="left:971.7px;top:964.5px;width:444.29999999999995px;height:5px;background:#3574F0;border-radius:3px"></div>
<svg style="left:1744px;top:959px" width="16" height="16"><circle cx="8" cy="8" r="7.8" fill="#3574F0"/><circle cx="8" cy="4.6" r="1.1" fill="#fff"/><path d="M8 7.3V12" stroke="#fff" stroke-width="1.8" stroke-linecap="round"/></svg>
<div class="t" style="left:843px;top:985.3px;font-size:14.6px">Android (13)</div>
<div class="t" style="left:934.3px;top:985.3px;font-size:14.6px">25%</div>
<div class="a" style="left:971.7px;top:991.5px;width:767.3px;height:5px;background:#43454A;border-radius:3px"></div>
<div class="a" style="left:971.7px;top:991.5px;width:191.5px;height:5px;background:#3574F0;border-radius:3px"></div>
<svg style="left:1744px;top:986px" width="16" height="16"><circle cx="8" cy="8" r="7.8" fill="#3574F0"/><circle cx="8" cy="4.6" r="1.1" fill="#fff"/><path d="M8 7.3V12" stroke="#fff" stroke-width="1.8" stroke-linecap="round"/></svg>
<div class="t" style="left:843px;top:1012.3999999999999px;font-size:14.6px">Android (9)</div>
<div class="t" style="left:934.3px;top:1012.3999999999999px;font-size:14.6px">8%</div>
<div class="a" style="left:971.7px;top:1019.0px;width:767.3px;height:5px;background:#43454A;border-radius:3px"></div>
<div class="a" style="left:971.7px;top:1019.0px;width:60.700000000000045px;height:5px;background:#3574F0;border-radius:3px"></div>
<svg style="left:1744px;top:1013.5px" width="16" height="16"><circle cx="8" cy="8" r="7.8" fill="#3574F0"/><circle cx="8" cy="4.6" r="1.1" fill="#fff"/><path d="M8 7.3V12" stroke="#fff" stroke-width="1.8" stroke-linecap="round"/></svg>
<div class="t" style="left:843px;top:1039.8px;font-size:14.6px">Other</div>
<div class="t" style="left:934.3px;top:1039.8px;font-size:14.6px">8%</div>
<div class="a" style="left:971.7px;top:1046.3px;width:767.3px;height:5px;background:#43454A;border-radius:3px"></div>
<div class="a" style="left:971.7px;top:1046.3px;width:60.700000000000045px;height:5px;background:#3574F0;border-radius:3px"></div>
<svg style="left:1744px;top:1040.8px" width="16" height="16"><circle cx="8" cy="8" r="7.8" fill="#3574F0"/><circle cx="8" cy="4.6" r="1.1" fill="#fff"/><path d="M8 7.3V12" stroke="#fff" stroke-width="1.8" stroke-linecap="round"/></svg>
<div class="t" style="left:829px;top:929.8px;font-size:14.6px">Android Versions</div>
<div class="a" style="left:950px;top:940px;width:812px;height:1px;background:#393B40"></div>

<div class="a" style="left:44px;top:745px;width:1743px;height:1px;background:#1E1F22"></div>

</div>
</body></html>
